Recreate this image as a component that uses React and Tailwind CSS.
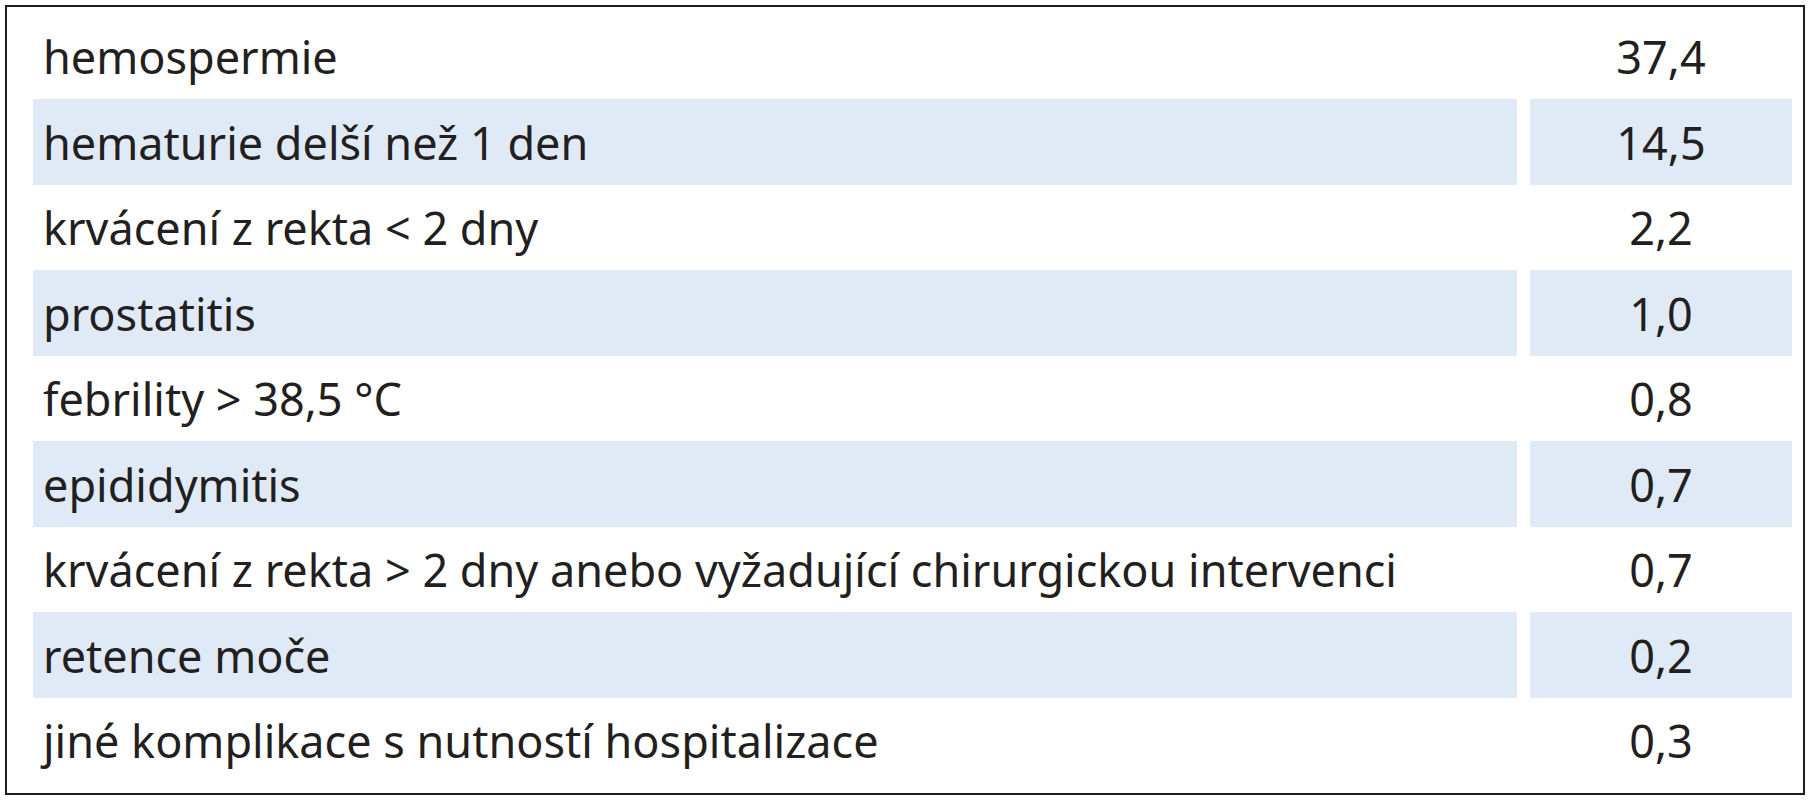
import React from "react";

const rows = [
  ["hemospermie", "37,4"],
  ["hematurie delší než 1 den", "14,5"],
  ["krvácení z rekta < 2 dny", "2,2"],
  ["prostatitis", "1,0"],
  ["febrility > 38,5 °C", "0,8"],
  ["epididymitis", "0,7"],
  ["krvácení z rekta > 2 dny anebo vyžadující chirurgickou intervenci", "0,7"],
  ["retence moče", "0,2"],
  ["jiné komplikace s nutností hospitalizace", "0,3"],
];

const App = () => {
  return (
    <div className="bg-white w-[1811px] h-[800px] overflow-hidden">
      <div
        className="m-[5px] w-[1800px] border-2 border-[#1c1c1c] pt-[6.5px] pl-[26px] pr-[11px] pb-[10px] text-[#231f20]"
        style={{ fontFamily: '"Noto Sans", sans-serif' }}
      >
        <div className="grid grid-cols-[1484px_262px] gap-x-[13px]">
          {rows.map(([label, value], index) => {
            const shaded = index % 2 === 1;
            return (
              <React.Fragment key={label}>
                <div
                  className={`h-[85.5px] flex items-center pl-[10px] pt-[1px] text-[45px] ${
                    shaded ? "bg-[#dfeaf6]" : ""
                  }`}
                >
                  {label}
                </div>
                <div
                  className={`h-[85.5px] flex items-center justify-center pt-[1px] text-[45px] ${
                    shaded ? "bg-[#dfeaf6]" : ""
                  }`}
                >
                  {value}
                </div>
              </React.Fragment>
            );
          })}
        </div>
      </div>
    </div>
  );
};

export default App;
